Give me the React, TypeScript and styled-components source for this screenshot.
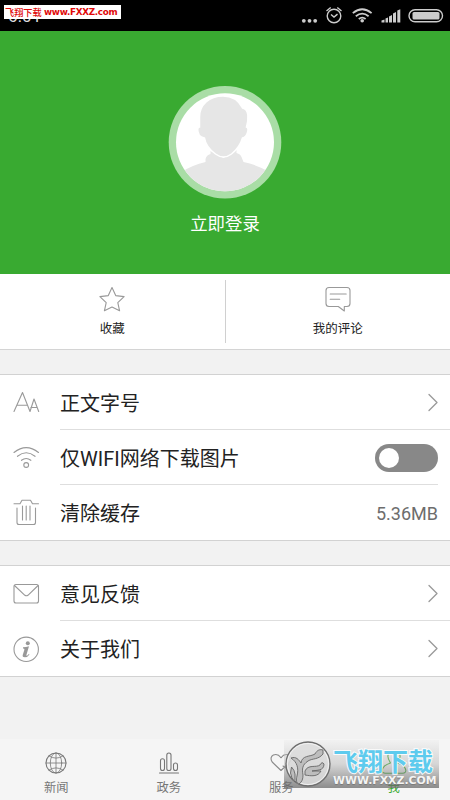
import React from 'react';
import styled, { createGlobalStyle } from 'styled-components';

const Global = createGlobalStyle`
  * { box-sizing: border-box; }
  body { margin: 0; background: #f2f2f2; font-family: Roboto, "Noto Sans CJK SC", sans-serif; color: #222; }
  svg { display: block; flex: none; }
`;

const Screen = styled.div`
  width: 450px;
  height: 800px;
  overflow: hidden;
  position: relative;
  display: flex;
  flex-direction: column;
  background: #f2f2f2;
`;

const StatusBar = styled.header`
  height: 31px;
  flex: none;
  position: relative;
  background: #000;
  display: flex;
  justify-content: space-between;
  padding-left: 8px;
`;

const Clock = styled.span`
  color: #ddd;
  font-size: 17px;
  line-height: 18px;
  padding-top: 7px;
  letter-spacing: 0.2px;
`;

const SiteTag = styled.div`
  position: absolute;
  left: 4px;
  top: 5px;
  width: 117px;
  height: 14px;
  background: #fff;
  color: #e00808;
  display: flex;
  align-items: center;
  gap: 3px;
  padding-left: 1px;
  white-space: nowrap;
  line-height: 14px;
`;

const TagName = styled.span`
  font: 500 9.2px/14px "Noto Sans CJK SC", sans-serif;
  width: 36px;
`;

const TagUrl = styled.span`
  font: bold 8.8px/14px "DejaVu Sans", sans-serif;
  letter-spacing: -0.3px;
`;

const Profile = styled.section`
  height: 243px;
  flex: none;
  background: #39aa31;
  display: flex;
  flex-direction: column;
  align-items: center;
  padding-top: 54px;
`;

const LoginText = styled.span`
  color: #fff;
  font-size: 17.4px;
  line-height: 24px;
  margin-top: 13px;
`;

const Shortcuts = styled.section`
  height: 76px;
  flex: none;
  display: flex;
  background: #fff;
  border-bottom: 1px solid #d4d4d4;
  padding: 6px 0;
`;

const Shortcut = styled.div`
  flex: 1;
  display: flex;
  flex-direction: column;
  align-items: center;
  padding-top: 6px;
  &:first-child { border-right: 1px solid #d0d0d0; }
`;

const ShortcutLabel = styled.span`
  font-size: 12.5px;
  line-height: 18px;
  margin-top: 8px;
`;

const Card = styled.section<{ $height: number; $gap: number }>`
  margin-top: ${p => p.$gap}px;
  height: ${p => p.$height}px;
  flex: none;
  background: #fff;
  border: solid #d2d2d2;
  border-width: 1px 0;
`;

const Row = styled.div`
  height: 55px;
  display: flex;
  align-items: center;
  padding-left: 12px;
`;

const RowBody = styled.div<{ $divider?: 'full' | 'inset' }>`
  flex: 1;
  height: 55px;
  margin-left: 20px;
  margin-right: ${p => (p.$divider === 'full' ? 0 : 12)}px;
  padding-right: ${p => (p.$divider === 'full' ? 12 : 0)}px;
  border-bottom: 1px solid ${p => (p.$divider ? '#dedede' : 'transparent')};
  display: flex;
  align-items: center;
  justify-content: space-between;
`;

const RowLabel = styled.span`
  font-size: 20px;
  line-height: 30px;
  padding-top: 4px;
`;

const RowValue = styled.span`
  font-size: 18px;
  color: #6d6d6d;
  padding-top: 3px;
`;

const Switch = styled.div`
  width: 63px;
  height: 28px;
  border-radius: 14px;
  background: #888;
  padding: 4px;
  margin-top: 1px;
`;

const Knob = styled.div`
  width: 20px;
  height: 20px;
  border-radius: 50%;
  background: #fff;
`;

const TabBar = styled.nav`
  margin-top: auto;
  height: 61px;
  flex: none;
  display: flex;
  background: #f5f5f5;
`;

const Tab = styled.div<{ $active?: boolean }>`
  flex: 1;
  display: flex;
  flex-direction: column;
  align-items: center;
  padding-top: 12px;
  color: ${p => (p.$active ? '#39aa31' : '#777')};
`;

const TabLabel = styled.span`
  font-size: 12.3px;
  line-height: 18px;
  margin-top: 4px;
`;

const Watermark = styled.aside`
  position: absolute;
  left: 284px;
  top: 740px;
  width: 155px;
  height: 48px;
  display: flex;
  background: linear-gradient(rgba(235, 235, 235, 0.35), rgba(175, 175, 175, 0.45) 50%, rgba(100, 100, 100, 0.72));
`;

const BrandText = styled.div`
  display: flex;
  flex-direction: column;
  margin-left: 1px;
  white-space: nowrap;
`;

const BrandName = styled.span`
  font: 700 25px/30px "Noto Sans CJK SC", sans-serif;
  margin-top: 5px;
  color: #5ecbee;
  -webkit-text-stroke: 2px rgba(255, 255, 255, 0.9);
  paint-order: stroke fill;
  height: 30px;
`;

const BrandUrl = styled.span`
  font: bold 10.9px/12px "DejaVu Sans", sans-serif;
  color: #f4f4f4;
  text-shadow: 0 1px 1px #777;
`;

const line = { fill: 'none', stroke: '#999', strokeWidth: 1.1, strokeLinejoin: 'round' as const, strokeLinecap: 'round' as const };

const StatusIcons = () => (
  <svg width="150" height="31" viewBox="300 0 150 31" fill="none" stroke="#ccc">
    <g fill="#ccc" stroke="none">
      <circle cx="303.8" cy="20.8" r="1.9" /><circle cx="309.5" cy="20.8" r="1.9" /><circle cx="315.2" cy="20.8" r="1.9" />
      <circle cx="362.2" cy="20.8" r="1.8" />
      <path d="M381.5 22.5v-2l3-1v3zM385.5 22.5v-4l2.5-1v5zM389 22.5v-6l3-1.5v7.5zM393 22.5v-9l3-1.5v10.5zM397.3 22.5v-12l3-1.2v13.2z" />
      <rect x="412.5" y="12" width="27" height="7.6" rx="1.5" />
    </g>
    <circle cx="334" cy="16" r="6.8" strokeWidth="1.4" />
    <path d="M331 14.5l3 2.6 3.5-3M326.5 11l4.2-3.5M341.5 11l-4.2-3.5" strokeWidth="1.4" />
    <path d="M352.8 13.1q9.4-7.8 18.8 0M355.8 16.2q6.4-5.2 12.8 0M358.8 19q3.4-2.6 6.8 0" strokeWidth="1.8" />
    <rect x="409" y="9.8" width="33.5" height="12" rx="6" strokeWidth="1.4" />
  </svg>
);

const Avatar = () => (
  <svg width="114" height="114" viewBox="168 85 114 114">
    <defs><clipPath id="portrait"><circle cx="225" cy="142.3" r="49" /></clipPath></defs>
    <circle cx="225" cy="142.3" r="56.3" fill="#a9dda6" />
    <circle cx="225" cy="142.3" r="49" fill="#fff" />
    <g clipPath="url(#portrait)" fill="#e6e6e6">
      <path d="M210.500 151v3q-4 1-5 5v3q-13 3-24 10l-6 25h100l-6-25q-12-7-26-10l-2-5q-1-3-5-4v-3l-13 8z" />
      <path stroke="#fff" strokeWidth="1.5" d="M223 96c-14 0-23.500 9-23.500 21v10c-3 0-2 8 2 10l3 1c1 7 7 13 11 16q8 6 16 0c5-4 9-9 11-16 5-1 7-10 4-11 2-7 3-18-4-19-4-8-11-12-19.500-12z" />
    </g>
  </svg>
);

const Star = () => (
  <svg width="26" height="26" viewBox="0 0 26 26" {...line}>
    <path d="M13 1.500l3.700 8.100 8.400 1-6.300 6 1.800 8.200-7.600-3.700-7.600 3.700 1.800-8.200-6.300-6 8.400-1z" />
  </svg>
);

const Comment = () => (
  <svg width="26" height="26" viewBox="0 0 26 26" {...line}>
    <path d="M4 1.500h18q3 0 3 3v13q0 3-3 3h-2.700v4.500l-6-4.500H4q-3 0-3-3v-13q0-3 3-3zM5.200 8h16M5.200 13.300h9.500" />
  </svg>
);

const FontSizeIcon = () => (
  <svg width="28" height="28" viewBox="12 389 28 28" {...line}>
    <path d="M14 411.500l8.500-19 7.500 19 4-12.500 4.700 12.500M17 405.300h10.500M30.800 407.500h6.300" />
  </svg>
);

const WifiIcon = () => (
  <svg width="28" height="28" viewBox="12 444 28 28" {...line}>
    <path d="M14 452.500q12.200-9.800 24.500 0M17.500 456.300q8.700-7 17.500 0M21.500 460.300q4.700-3.700 9.300 0" />
    <circle cx="26.2" cy="465" r="2.4" />
  </svg>
);

const TrashIcon = () => (
  <svg width="28" height="28" viewBox="12 499 28 28" {...line}>
    <path d="M14 503.700h6l2-3.500h8.500l2 3.500h6M17 508v14.500q0 2 2 2h14.500q2 0 2-2V508M22.500 506v14M26.200 506v14M30 506v14" />
  </svg>
);

const MailIcon = () => (
  <svg width="28" height="28" viewBox="12 579 28 28" {...line}>
    <rect x="14" y="583.5" width="24.5" height="18.5" rx="2" />
    <path d="M14.500 584.500l10.400 9.800q1.500 1 3 0l10.200-9.800" />
  </svg>
);

const InfoIcon = () => (
  <svg width="28" height="28" viewBox="12 634 28 28">
    <circle cx="26.2" cy="648.3" r="12.2" {...line} />
    <circle cx="27.8" cy="642.2" r="2" fill="#999" />
    <path d="M23 646.300q3-.1 6-1l-2.600 8.700q-.2.800.4.700.8-.2 2-1.800l.7.500q-1.800 2.800-4.600 2.800-2.900 0-2.100-2.500l1.600-5q.3-1-1.400-1.100z" fill="#999" />
  </svg>
);

const Chevron = () => (
  <svg width="10" height="20" viewBox="0 0 10 20" {...line} strokeWidth="1.3">
    <path d="M1 2.500l8 8-8 8" />
  </svg>
);

const GlobeIcon = () => (
  <svg width="24" height="24" viewBox="0 0 24 24" {...line} stroke="#777">
    <circle cx="12" cy="12" r="10" />
    <ellipse cx="12" cy="12" rx="5.7" ry="10" strokeWidth=".8" />
    <path d="M12 2v20M2 12h20M5 5q7 4.400 14 0M5 19q7-4.400 14 0" strokeWidth=".8" />
  </svg>
);

const ChartIcon = () => (
  <svg width="24" height="24" viewBox="0 0 24 24" {...line} stroke="#777">
    <rect x="3.5" y="7.7" width="4" height="11.8" rx="2" />
    <rect x="9.8" y="2" width="4.2" height="17.5" rx="2.1" />
    <rect x="16.5" y="12" width="4" height="7.5" rx="2" />
    <path d="M2.500 22h19" />
  </svg>
);

const HeartIcon = () => (
  <svg width="24" height="24" viewBox="0 0 24 24" {...line} stroke="#888">
    <path d="M12 19.500L3.200 11C-1 4.500 7.500.5 12 6.700 16.500.5 25 4.500 20.800 11zM14 15l3 2 3-4" />
  </svg>
);

const PersonIcon = () => (
  <svg width="28" height="24" viewBox="0 0 28 24" {...line} stroke="#39aa31">
    <path d="M10.500 12Q5 3.500 11 .7q3-1.200 6 0 6 2.800.5 11.300 7.500 2.300 8.300 7.200.2 3-3.200 3H5.400q-3.400 0-3.200-3Q3 14.300 10.500 12z" />
  </svg>
);

const BirdLogo = () => (
  <svg width="48" height="48" viewBox="0 0 48 48">
    <circle cx="24" cy="24" r="22" fill="#dcdcdc" fillOpacity=".85" stroke="#6e6e6e" strokeWidth="1.3" />
    <circle cx="24" cy="24" r="20.5" fill="none" stroke="#f2f2f2" />
    <g fill="#bdbdbd" stroke="#666" strokeWidth=".9" strokeLinejoin="round">
      <path d="M7.500 27q3 3 3.500 7v8q-4-4-4.500-9z" />
      <path d="M7 18c5-2 8 2 10 5 1-8 9-6 14-9 2-4 5-5 8-4v4c-5 6-10 4-15 7-6 4-6 8-5 14 0 4-1 7-4 9-3-1-3-4-2-8 2-8 0-14-6-18z" />
      <path d="M21 31c3-7 11-3 15-6q2-4 4-1c0 7-7 6-12 7h9c-3 6-10 5-16 4z" />
    </g>
  </svg>
);

export default function App() {
  return (
    <>
      <Global />
      <Screen>
        <StatusBar>
          <Clock>6:01</Clock>
          <StatusIcons />
          <SiteTag><TagName>飞翔下载</TagName><TagUrl>www.FXXZ.com</TagUrl></SiteTag>
        </StatusBar>
        <Profile>
          <Avatar />
          <LoginText>立即登录</LoginText>
        </Profile>
        <Shortcuts>
          <Shortcut><Star /><ShortcutLabel>收藏</ShortcutLabel></Shortcut>
          <Shortcut><Comment /><ShortcutLabel>我的评论</ShortcutLabel></Shortcut>
        </Shortcuts>
        <Card $height={167} $gap={24}>
          <Row><FontSizeIcon /><RowBody $divider="full"><RowLabel>正文字号</RowLabel><Chevron /></RowBody></Row>
          <Row><WifiIcon /><RowBody $divider="inset"><RowLabel>仅WIFI网络下载图片</RowLabel><Switch><Knob /></Switch></RowBody></Row>
          <Row><TrashIcon /><RowBody><RowLabel>清除缓存</RowLabel><RowValue>5.36MB</RowValue></RowBody></Row>
        </Card>
        <Card $height={112} $gap={24}>
          <Row><MailIcon /><RowBody $divider="full"><RowLabel>意见反馈</RowLabel><Chevron /></RowBody></Row>
          <Row><InfoIcon /><RowBody><RowLabel>关于我们</RowLabel><Chevron /></RowBody></Row>
        </Card>
        <TabBar>
          <Tab><GlobeIcon /><TabLabel>新闻</TabLabel></Tab>
          <Tab><ChartIcon /><TabLabel>政务</TabLabel></Tab>
          <Tab><HeartIcon /><TabLabel>服务</TabLabel></Tab>
          <Tab $active><PersonIcon /><TabLabel>我</TabLabel></Tab>
        </TabBar>
        <Watermark>
          <BirdLogo />
          <BrandText><BrandName>飞翔下载</BrandName><BrandUrl>WWW.FXXZ.COM</BrandUrl></BrandText>
        </Watermark>
      </Screen>
    </>
  );
}
